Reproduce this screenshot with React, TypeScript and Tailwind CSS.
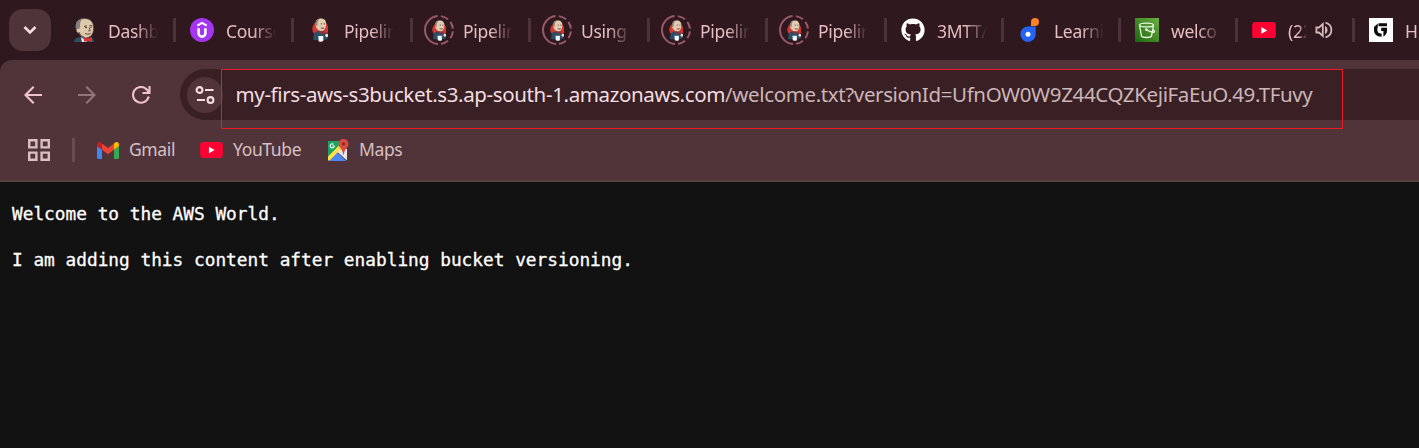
import type { ReactNode } from "react";
import { FaGithub } from "react-icons/fa";

function JenkinsHead() {
  return (
    <svg width="20" height="24" viewBox="0 0 20 24">
      <path d="M0 24c0-2 1-3.600 4-4.500l5-.5 7 .5c2.500.4 4 2 4 4.500z" fill="#2b5063" />
      <path d="M2.200 10C1.500 4 5 .5 10.500.5 16.500.5 20 4 19.600 11c-.3 5-2.600 8.500-7.600 9-3.500 0-6-1.800-7-4.500C3 15.300 1.800 13 2.200 10z" fill="#e0c9aa" stroke="#4b3f3e" strokeWidth=".8" />
      <path d="M2 11C.8 5 3.500 1 9 .6 6.500 2 5.900 5 6.200 8.500L5 11z" fill="#858080" />
      <path d="M10 8.400l3-.5M15.500 7.600l2.800.2M15 9.500l1.300 3-2 .5M11 15.500c1.700 1 4 .8 5.600-.2M5 14c1 3 2.500 4.500 5 5" fill="none" stroke="#574440" strokeWidth="1" />
      <circle cx="12" cy="9.600" r=".8" fill="#33292b" />
      <circle cx="17" cy="9.300" r=".7" fill="#33292b" />
      <path d="M7 19l5 4 1 1H8z" fill="#fff" />
      <path d="M9.500 19.500l4 1.200 4.500-1.700v5l-4.500-1.300L10 24z" fill="#e0322d" />
    </svg>
  );
}

function Butler({ size }: { size: number }) {
  return (
    <svg width={size * 0.7} height={size} viewBox="0 0 17 24">
      <circle cx="8.500" cy="11" r="8.200" fill="#d33833" />
      <path d="M1.500 22c-.4-3 0-7 3-8.500L8 13l5 1c2.500 1.500 2.800 4 3 7l-5 1.500z" fill="#2c4f68" />
      <path d="M3.500 6C3.500 2.500 5.500.3 9 .3c3.800 0 5.500 2.300 5.300 6.200-.2 3.700-1.800 6.500-4.800 6.500C6 13 3.600 10 3.500 6z" fill="#e3cbae" />
      <path d="M3.600 7.500C3 4 4.500 1 7.500.5 5.500 2.500 5.300 5 5.400 8z" fill="#8b8078" />
      <path d="M9 5.800h1.200M12 5.800h1.200M9 9.800c1.200.7 2.400.6 3.400 0" stroke="#4a3a38" strokeWidth="1" fill="none" />
      <path d="M7.500 13l3 1.400 3-1.400v3l-3-1-2.500 1z" fill="#a92b31" />
      <path d="M6.400 18h5v5.200c-1.500 1-3.500 1-4.700.2z" fill="#f4f6f7" />
      <circle cx="15" cy="17.500" r="1.600" fill="#eee2d8" />
    </svg>
  );
}

function LoadingButler() {
  return (
    <div className="relative flex size-[30px] items-center justify-center">
      <Butler size={21} />
      <svg className="absolute inset-0" width="30" height="30" viewBox="0 0 30 30">
        <circle
          cx="15" cy="15" r="14" fill="none" stroke="#98596a" strokeWidth="2"
          pathLength="360" transform="rotate(-90 15 15)"
          strokeDasharray="0 8 32 14 30 12 30 14 32 12 170 6"
        />
      </svg>
    </div>
  );
}

function Udemy() {
  return (
    <svg width="24" height="24" viewBox="0 0 24 24">
      <circle cx="12" cy="12" r="12" fill="#a435f0" />
      <path d="M7.300 7.700L12 5l4.700 2.700" fill="none" stroke="#fff" strokeWidth="2" />
      <path d="M8.600 10.200v5.100a3.400 3.400 0 0 0 6.800 0v-5.100" fill="none" stroke="#fff" strokeWidth="2.600" />
    </svg>
  );
}

function Drops() {
  return (
    <svg width="20" height="24" viewBox="0 0 20 24">
      <path d="M11 8V4a4 4 0 1 1 4 4z" fill="#ff7f2a" />
      <path d="M8 8.500h7.700V16A7.700 7.700 0 1 1 8 8.500z" fill="#2463f4" />
      <circle cx="8" cy="16.300" r="2.500" fill="#fff" />
    </svg>
  );
}

function Bucket() {
  return (
    <svg width="24" height="24" viewBox="0 0 24 24">
      <defs>
        <linearGradient id="s3" x1="0" y1="1" x2="1" y2="0">
          <stop offset="0" stopColor="#1b660f" />
          <stop offset="1" stopColor="#6cae3e" />
        </linearGradient>
      </defs>
      <path d="M0 0h24v24H0z" fill="url(#s3)" />
      <g fill="none" stroke="#e9f6e2" strokeWidth="1.300">
        <ellipse cx="11.500" cy="7" rx="7" ry="1.900" />
        <path d="M4.500 7l2 11.200c1.200 1.700 8.700 1.700 10 0L18.500 7M11.300 11.700c2.700 1.600 6 2.800 7.800 2.500.9-.5.400-1.300-1.100-2.300" />
      </g>
      <circle cx="11.300" cy="11.500" r="1.200" fill="#fff" />
    </svg>
  );
}

function YouTube({ width }: { width: number }) {
  return (
    <svg width={width} height={width * 0.7} viewBox="0 0 24 17">
      <rect width="24" height="17" rx="3.500" fill="#ff0033" />
      <path d="M9.300 5v7l6-3.500z" fill="#fff" />
    </svg>
  );
}

function GSquare() {
  return (
    <svg width="24" height="24" viewBox="0 0 24 24">
      <path d="M0 0h24v24H0z" fill="#fff" />
      <path d="M9.500 5.300H18v3H9.500zM5 9l3.800-3.400v3.600C8.200 10 8.200 13 9 14.200c.8 1 2.200 1.300 3.600 1.300v3.200C7.500 18.800 5 16 5 12zM12.200 9.800H18v3c0 2.300-1.200 4.600-3.600 5.600v-5.400h-2.200z" fill="#0b0b0b" />
    </svg>
  );
}

function Speaker() {
  return (
    <svg width="18" height="18" viewBox="0 0 18 18" fill="none" stroke="#d3b9bc" strokeWidth="1.800">
      <path d="M1.400 6.500H4l3.800-3.400v11.800L4 11.500H1.400z" />
      <path d="M10.500 5.500c2 1.300 2 5.700 0 7z" fill="#d3b9bc" strokeWidth="1" />
      <path d="M10.500 1.700c7.800 2 7.800 12.600 0 14.600" />
    </svg>
  );
}

function Gmail() {
  return (
    <svg width="22" height="17" viewBox="0 0 22 17">
      <path d="M0 4l5 3.800V17H1.500C.6 17 0 16.400 0 15.500z" fill="#4285f4" />
      <path d="M22 4l-5 3.800V17h3.500c.9 0 1.500-.6 1.500-1.500z" fill="#34a853" />
      <path d="M17 1.500v6.300L22 4V2.500C22 .3 19.500-.7 17.800.8z" fill="#fbbc04" />
      <path d="M5 7.800V1.500L11 6l6-4.500v6.300l-6 4.500z" fill="#ea4335" />
      <path d="M0 2.500V4l5 3.800V1.500L4.200.8C2.500-.7 0 .3 0 2.500z" fill="#c5221f" />
    </svg>
  );
}

function Maps() {
  return (
    <svg width="22" height="22" viewBox="0 0 22 22">
      <path d="M1 2h13l4 5L1 21z" fill="#1ea362" />
      <path d="M1 17.500L12.500 6l3 3L3 21.500H1z" fill="#ffe047" />
      <path d="M2.500 22l8-8.500L19 22z" fill="#4a89f3" />
      <path d="M10.500 13l5-4 4.500 1v11.500z" fill="#e8e8ea" />
      <path d="M6.500 5.400a2 2 0 1 0 .7 1.700H5.500" fill="none" stroke="#e9f7ef" strokeWidth="1.200" />
      <path d="M16.500 0a5 5 0 0 0-5 5c0 3.600 4.300 5 4.600 10.500h.8C17.200 10 21.500 8.600 21.500 5a5 5 0 0 0-5-5z" fill="#dc4b3e" />
      <circle cx="16.500" cy="5" r="1.700" fill="#8c2a22" />
    </svg>
  );
}

type TabItem = { label: string; icon: ReactNode; width: string; audible?: boolean };

const tabs: TabItem[] = [
  { label: "Dashb", icon: <JenkinsHead />, width: "w-[118px]" },
  { label: "Course", icon: <Udemy />, width: "w-[118px]" },
  { label: "Pipelin", icon: <Butler size={24} />, width: "w-[119px]" },
  { label: "Pipelin", icon: <LoadingButler />, width: "w-[118px]" },
  { label: "Using", icon: <LoadingButler />, width: "w-[119px]" },
  { label: "Pipelin", icon: <LoadingButler />, width: "w-[118px]" },
  { label: "Pipelin", icon: <LoadingButler />, width: "w-[119px]" },
  { label: "3MTT/", icon: <FaGithub size={24} color="#fff" />, width: "w-[117px]" },
  { label: "Learni", icon: <Drops />, width: "w-[117px]" },
  { label: "welco", icon: <Bucket />, width: "w-[117px]" },
  { label: "(22", icon: <YouTube width={24} />, width: "w-[117px]", audible: true },
  { label: "H", icon: <GSquare />, width: "w-[117px]" },
];

function Tab({ tab, first }: { tab: TabItem; first: boolean }) {
  return (
    <div className={`flex h-full shrink-0 items-center ${tab.width}`}>
      <div className={`h-6 w-[3px] shrink-0 ${first ? "" : "bg-[#4d3238]"}`} />
      <div className="ml-[11px] flex w-[30px] shrink-0 items-center justify-center">{tab.icon}</div>
      <div
        className={`ml-[9px] overflow-hidden pt-px text-[17.500px] leading-6 tracking-[-0.300px] whitespace-nowrap text-[#e5bdc3] ${
          tab.audible
            ? "w-[19px] [mask-image:linear-gradient(to_right,#000_55%,transparent)]"
            : "w-[50px] [mask-image:linear-gradient(to_right,#000_55%,transparent)]"
        }`}
      >
        {tab.label}
      </div>
      {tab.audible && <div className="ml-2"><Speaker /></div>}
    </div>
  );
}

function Bookmark({ icon, label, className }: { icon: ReactNode; label: string; className: string }) {
  return (
    <div className={`flex items-center ${className}`}>
      {icon}
      <span className="-mt-0.5 text-[17.500px] leading-6 tracking-[-0.370px]">{label}</span>
    </div>
  );
}

export default function App() {
  return (
    <div className="relative flex h-[448px] w-[1419px] flex-col overflow-hidden bg-[#2f191e] font-['Noto_Sans',sans-serif]">
      <div className="flex h-[60px] shrink-0 items-center overflow-hidden">
        <div className="ml-[9px] flex h-[42px] w-[42px] shrink-0 items-center justify-center rounded-[14px] bg-[#4f343a]">
          <svg width="14" height="10" viewBox="0 0 14 10" fill="none" stroke="#f6dde1" strokeWidth="2.600">
            <path d="M1.500 2L7 7.500 12.500 2" />
          </svg>
        </div>
        <div className="ml-1 flex h-full">
          {tabs.map((tab, i) => (
            <Tab key={i} tab={tab} first={i === 0} />
          ))}
        </div>
      </div>

      <div className="flex h-[122px] shrink-0 flex-col rounded-tl-[12px] border-b-2 border-[#56423f] bg-[#503439]">
        <div className="mt-[9px] flex h-[51px] shrink-0 items-center">
          <svg className="ml-6" width="18" height="18" viewBox="0 0 18 18" fill="none" stroke="#f0c2c9" strokeWidth="2.100">
            <path d="M18 9H1.500M9.700.8L1.500 9l8.200 8.200" />
          </svg>
          <svg className="ml-9" width="18" height="18" viewBox="0 0 18 18" fill="none" stroke="#90757a" strokeWidth="2.100">
            <path d="M0 9h16.500M8.300.8L16.500 9l-8.200 8.200" />
          </svg>
          <svg className="ml-9" width="19" height="18" viewBox="0 0 19 18" fill="none" stroke="#f0c2c9" strokeWidth="2.100">
            <path d="M16.700 10.500A7.900 7.900 0 1 1 14.800 3.500L17 6.300M17.500 0v7H10.500" />
          </svg>
          <div className="ml-[29px] flex h-[51px] flex-1 items-center rounded-l-full bg-[#382024]">
            <div className="ml-[7px] flex size-9 items-center justify-center rounded-full bg-[#503439]">
              <svg width="20" height="18" viewBox="0 0 20 18" fill="none" stroke="#f5dce0" strokeWidth="2.100">
                <circle cx="4.500" cy="4" r="2.900" />
                <path d="M10 4h8.500M2 14h8" />
                <circle cx="15.500" cy="14" r="2.900" />
              </svg>
            </div>
            <div className="-mt-0.5 ml-[12.500px] text-[20.500px] leading-8 tracking-[-0.370px] whitespace-nowrap text-[#ceb5b8]">
              <span className="text-[#f4dde0]">my-firs-aws-s3bucket.s3.ap-south-1.amazonaws.com</span>
              /welcome.txt?versionId=UfnOW0W9Z44CQZKejiFaEuO.49.TFuvy
            </div>
          </div>
        </div>
        <div className="flex h-[60px] items-center text-[#d6c0c2]">
          <svg className="ml-7" width="22" height="22" viewBox="0 0 22 22" fill="none" stroke="#d8bfc1" strokeWidth="2.400">
            <path d="M1.200 1.200h7.200v7.200H1.200zM13.600 1.200h7.200v7.200h-7.200zM1.200 13.600h7.200v7.200H1.200zM13.600 13.600h7.200v7.200h-7.200z" />
          </svg>
          <div className="ml-[22px] h-6 w-[3px] bg-[#6a4b50]" />
          <Bookmark icon={<Gmail />} label="Gmail" className="ml-[22px] w-[103px] gap-[10px]" />
          <Bookmark icon={<YouTube width={23} />} label="YouTube" className="w-[127px] gap-[10px]" />
          <Bookmark icon={<Maps />} label="Maps" className="gap-[10px]" />
        </div>
      </div>

      <pre className="flex-1 bg-[#121212] pt-5 pl-3 font-['DejaVu_Sans_Mono',monospace] text-[17.800px] leading-[23px] text-white [-webkit-text-stroke:0.300px_white]">
        {"Welcome to the AWS World.\n\nI am adding this content after enabling bucket versioning."}
      </pre>

      <div className="absolute top-[69px] left-[221px] h-[60px] w-[1122px] border border-[#ed1c24]" />
    </div>
  );
}
